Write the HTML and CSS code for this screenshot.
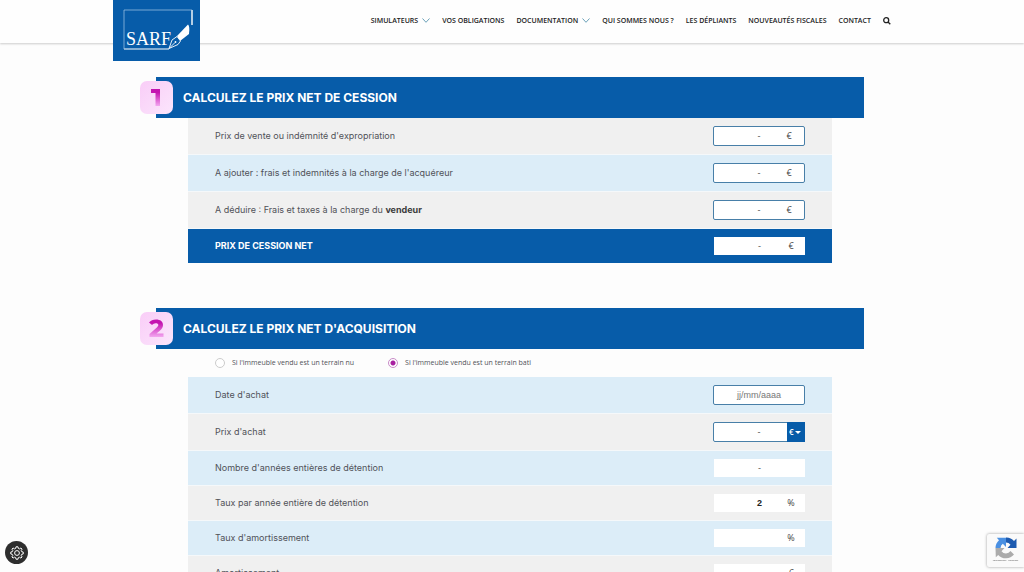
FILE: index.html
```html
<!DOCTYPE html>
<html lang="fr">
<head>
<meta charset="utf-8">
<meta name="viewport" content="width=device-width, initial-scale=1">
<title>SARF - Simulateur</title>
<link rel="stylesheet" href="styles.css">
</head>
<body>
<header class="header">
  <a class="logo" href="#" aria-label="SARF">
    <svg width="87" height="61" viewBox="0 0 87 61">
      <path d="M79 10V25" fill="none" stroke="#fff" stroke-width="1.4"/>
      <path d="M11 49H56" fill="none" stroke="#fff" stroke-width="1.2"/>
      <path d="M79 10H11V49" fill="none" stroke="#a9c8e6" stroke-width="0.7"/>
      <text class="logo-text" x="13" y="45">SARF</text>
      <path d="M64 36L75 24.500Q77 26 76 34L67 41Z" fill="#fff"/>
      <path d="M56 48.500L59 40L64 36.500L67.500 41L65 44.500L56 48.500L62 42.500" fill="#075ca9" stroke="#fff" stroke-width="0.9"/>
      <circle cx="62.500" cy="42" r="0.900" fill="#fff"/>
    </svg>
  </a>
  <nav class="nav">
    <a href="#">SIMULATEURS <svg class="chevron" viewBox="0 0 8 5"><path d="M.5.5L4 4.300 7.500.5"/></svg></a>
    <a href="#">VOS OBLIGATIONS</a>
    <a href="#">DOCUMENTATION <svg class="chevron" viewBox="0 0 8 5"><path d="M.5.5L4 4.300 7.500.5"/></svg></a>
    <a href="#">QUI SOMMES NOUS ?</a>
    <a href="#">LES DÉPLIANTS</a>
    <a href="#">NOUVEAUTÉS FISCALES</a>
    <a href="#">CONTACT</a>
    <button class="search" type="button" aria-label="Rechercher">
      <svg width="8" height="8" viewBox="0 0 8 8"><circle cx="3.200" cy="3.200" r="2.500"/><path d="M5 5L7.300 7.300"/></svg>
    </button>
  </nav>
</header>

<main class="main">
  <section class="section">
    <h2 class="title">
      <svg class="badge" viewBox="0 0 33 33" role="img" aria-label="1">
        <defs><linearGradient id="ink" x1="0" y1="0" x2="0" y2="1"><stop offset="0.200" stop-color="#c414b0"/><stop offset="1" stop-color="#f3a6f0"/></linearGradient>
        <linearGradient id="tile" x1="0" y1="0" x2="1" y2="1"><stop offset="0" stop-color="#f9cdf7"/><stop offset="1" stop-color="#fbe5fc"/></linearGradient></defs>
        <rect width="33" height="33" rx="7" fill="url(#tile)"/>
        <path d="M11 8H20V25H15.500V12H11Z" fill="url(#ink)"/>
      </svg>
      CALCULEZ LE PRIX NET DE CESSION
    </h2>
    <div class="rows">
      <div class="row grey"><label for="vente">Prix de vente ou indémnité d'expropriation</label><span class="field edit"><input id="vente" value="-"><span class="unit">€</span></span></div>
      <div class="row blue"><label for="frais">A ajouter : frais et indemnités à la charge de l'acquéreur</label><span class="field edit"><input id="frais" value="-"><span class="unit">€</span></span></div>
      <div class="row grey"><label for="taxes">A déduire : Frais et taxes à la charge du <b>vendeur</b></label><span class="field edit"><input id="taxes" value="-"><span class="unit">€</span></span></div>
      <div class="row total"><label for="net">PRIX DE CESSION NET</label><span class="field"><input id="net" value="-" readonly><span class="unit">€</span></span></div>
    </div>
  </section>

  <section class="section">
    <h2 class="title">
      <svg class="badge" viewBox="0 0 33 33" role="img" aria-label="2">
        <rect width="33" height="33" rx="7" fill="url(#tile)"/>
        <path d="M9 10.500Q11.500 7.500 16 7.500C20.500 7.500 23 9.600 23 13C23 15.300 22 16.800 19.500 19L16.500 21.500H23.500V25H9.500V22L16 16.200C17.800 14.600 18.300 14 18.300 13C18.300 11.800 17.300 11.200 15.700 11.200Q13.500 11.200 12 13Z" fill="url(#ink)"/>
      </svg>
      CALCULEZ LE PRIX NET D'ACQUISITION
    </h2>
    <div class="choices">
      <label><input type="radio" name="terrain">Si l'immeuble vendu est un terrain nu</label>
      <label><input type="radio" name="terrain" checked>Si l'immeuble vendu est un terrain bati</label>
    </div>
    <div class="rows">
      <div class="row blue"><label for="date">Date d'achat</label><span class="field edit"><input id="date" placeholder="jj/mm/aaaa"></span></div>
      <div class="row grey"><label for="achat">Prix d'achat</label><span class="field edit"><input id="achat" value="-"><span class="currency"><select aria-label="Devise"><option>€</option><option>F</option></select></span></span></div>
      <div class="row blue"><label for="annees">Nombre d'années entières de détention</label><span class="field"><input id="annees" value="-" readonly></span></div>
      <div class="row grey"><label for="taux">Taux par année entière de détention</label><span class="field"><input class="strong" id="taux" value="2" readonly><span class="unit">%</span></span></div>
      <div class="row blue"><label for="amort">Taux d'amortissement</label><span class="field"><input id="amort" readonly><span class="unit">%</span></span></div>
      <div class="row grey"><label for="amortissement">Amortissement</label><span class="field"><input id="amortissement" readonly><span class="unit">€</span></span></div>
    </div>
  </section>
</main>

<button class="settings" type="button" aria-label="Gérer les cookies">
  <svg width="14" height="14" viewBox="0 0 14 14"><path d="M6 .8H8L8.300 2.400 9.600 2.900 10.900 2 12.100 3.200 11.200 4.500 11.700 5.700 13.200 6V8L11.700 8.300 11.200 9.500 12.100 10.900 10.900 12.100 9.600 11.200 8.300 11.700 8 13.200H6L5.700 11.700 4.400 11.200 3.100 12.100 1.900 10.900 2.800 9.500 2.300 8.300.8 8V6L2.300 5.700 2.800 4.500 1.900 3.200 3.100 2 4.400 2.900 5.700 2.400Z"/><circle cx="7" cy="7" r="2.400"/></svg>
</button>
<aside class="captcha">
  <svg width="22" height="22" viewBox="0 0 22 22">
    <path d="M11 .5A10 10 0 0 1 19 4L21.500 1.500V11H12.500L15.500 7.800A5.500 5.500 0 0 0 11 5.500Z" fill="#1c5ab0"/>
    <path d="M.5 11A10.500 10.500 0 0 1 4 3.200L1.800.8H11V10L7.800 6.800A5.500 5.500 0 0 0 5.500 11Z" fill="#4a90e2"/>
    <path d="M.5 11H9.500L6.500 14.200A5.500 5.500 0 0 0 15.500 14L19 17.500A10.500 10.500 0 0 1 3.200 18L.8 20.300Z" fill="#ababab"/>
  </svg>
  <small>Confidentialité - Conditions</small>
</aside>
</body>
</html>
```
FILE: styles.css
```css
* { box-sizing: border-box; }
html { height: 100%; }
body {
  margin: 0;
  height: 100%;
  overflow: hidden;
  background: #fdfdfd;
  color: #505258;
  font: 9px/12px Inter, sans-serif;
}
.header {
  display: flex;
  justify-content: space-between;
  align-items: flex-start;
  height: 43px;
  padding: 0 13% 0 11%;
  background: #fefefe;
  box-shadow: 0 1px 2px #ccc;
}
.logo { display: block; height: 61px; background: #075ca9; }
.logo svg { display: block; }
.logo-text { fill: #fff; font: 18px "Liberation Serif", serif; }
.nav { display: flex; align-items: center; gap: 12px; height: 41px; }
.nav a {
  display: flex;
  align-items: center;
  gap: 4px;
  color: #222;
  font: 600 7px/10px "Open Sans", sans-serif;
  text-decoration: none;
  white-space: nowrap;
}
.chevron { width: 8px; height: 5px; fill: none; stroke: #6aa0b8; }
.search { display: flex; padding: 0; border: 0; background: none; }
.search svg { fill: none; stroke: #222; stroke-width: 1.3; }

.main { width: 70%; max-width: 712px; margin: 0 auto; padding: 34px 4px 0 0; }
.section { margin-bottom: 45px; }
.title {
  display: flex;
  align-items: center;
  gap: 10px;
  height: 41px;
  margin: 0;
  background: #075ca9;
  color: #fff;
  font: 700 12px/16px Inter, sans-serif;
}
.badge { width: 33px; height: 33px; margin-left: -16px; }
.rows { margin: 0 32px; }
.row {
  display: flex;
  align-items: center;
  justify-content: space-between;
  padding: 8px 27px;
  border-bottom: 1px solid #f5f8fa;
}
.grey { background: #f0f0f0; }
.blue { background: #dcedf8; }
.total { background: #075ca9; color: #fff; font-weight: 700; border: 0; }
.row b { color: #3c3c3c; }
.field { position: relative; display: flex; width: 91px; height: 18px; background: #fff; }
.edit { width: 92px; height: 20px; border: 1px solid #487fa8; border-radius: 2px; }
.field input {
  width: 100%;
  padding: 0;
  border: 0;
  background: none;
  color: #555;
  font: 9px/12px "Liberation Sans", sans-serif;
  text-align: center;
}
.field input::placeholder { color: #777; opacity: 1; }
.field .strong { color: #222; font-weight: 700; }
.unit {
  position: absolute;
  top: 0;
  bottom: 0;
  right: 8px;
  width: 12px;
  display: flex;
  align-items: center;
  justify-content: center;
  color: #444;
  font: 9px/12px "Open Sans", sans-serif;
}
.edit .unit { right: 9px; }
.currency { position: absolute; top: -1px; right: -1px; bottom: -1px; width: 18px; background: #075ca9; }
.currency select {
  width: 100%;
  height: 100%;
  padding: 0 0 0 2px;
  border: 0;
  appearance: none;
  background: none;
  color: #fff;
  font: 600 8px/12px "Open Sans", sans-serif;
}
.currency::after {
  content: "";
  position: absolute;
  right: 4px;
  top: 9px;
  border: 3px solid transparent;
  border-top-color: #fff;
  border-bottom: 0;
  pointer-events: none;
}
.choices {
  display: flex;
  gap: 34px;
  align-items: center;
  height: 28px;
  padding-left: 59px;
  font: 7px/10px "Open Sans", sans-serif;
}
.choices label { display: flex; align-items: center; gap: 7px; }
.choices input {
  appearance: none;
  width: 10px;
  height: 10px;
  margin: 0;
  border: 1px solid #ccc;
  border-radius: 50%;
  background: #fff;
}
.choices input:checked {
  border-color: #c98bc8;
  background: radial-gradient(circle, #a81fa0 2px, #fff 3px);
}
.settings {
  position: fixed;
  left: 5px;
  bottom: 8px;
  display: flex;
  align-items: center;
  justify-content: center;
  width: 23px;
  height: 23px;
  padding: 0;
  border: 0;
  border-radius: 50%;
  background: #2e2e2e;
}
.settings svg { fill: none; stroke: #fff; stroke-width: 1; }
.captcha {
  position: fixed;
  right: 0;
  bottom: 5px;
  display: flex;
  flex-direction: column;
  align-items: center;
  width: 37px;
  height: 33px;
  padding-top: 3px;
  background: #fafafa;
  border-radius: 2px 0 0 2px;
  box-shadow: 0 0 3px #999;
}
.captcha small { color: #555; font: 2px/4px "Open Sans", sans-serif; white-space: nowrap; }
```
